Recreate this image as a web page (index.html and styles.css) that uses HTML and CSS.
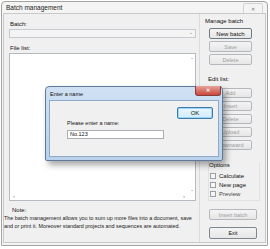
FILE: index.html
```html
<!DOCTYPE html>
<html>

<head>
  <title>Batch management</title>
  <link rel="stylesheet" href="styles.css">
</head>

<body>
  <div class="window">
    <div class="titlebar">
      <span class="title">Batch management</span>
      <span class="close">&#x2715;</span>
    </div>
    <div class="client">
      <div class="main">
        <div class="label">Batch:</div>
        <div class="combo"><span class="arrow">&#x2304;</span></div>
        <div class="label list-label">File list:</div>
        <div class="listbox">
          <div class="vscroll">
            <span>&#x2304;</span>
            <span>&#x2304;</span>
          </div>
          <div class="hscroll">
            <span>&#x2039;</span>
            <span>&#x203A;</span>
          </div>
        </div>
        <div class="note-label">Note:</div>
        <p class="note">The batch management allows you to sum up more files into a document, save<br>and or print it. Moreover standard projects and sequences are automated.</p>
      </div>

      <div class="side">
        <div class="group-label">Manage batch</div>
        <button class="btn default">New batch</button>
        <button class="btn" disabled>Save</button>
        <button class="btn" disabled>Delete</button>

        <div class="group-label edit-label">Edit list:</div>
        <button class="btn small" disabled>Add</button>
        <button class="btn small" disabled>Insert</button>
        <button class="btn small" disabled>Delete</button>
        <button class="btn small" disabled>Upload</button>
        <button class="btn small" disabled>Downward</button>

        <div class="options">
          <div class="group-label">Options</div>
          <label class="check"><span class="box"></span>Calculate</label>
          <label class="check"><span class="box"></span>New page</label>
          <label class="check off"><span class="box"></span>Preview</label>
        </div>

        <button class="btn wide" disabled>Insert batch</button>
        <button class="btn wide exit">Exit</button>
      </div>
    </div>
  </div>

  <!-- modal over the main window -->
  <div class="dialog">
    <div class="dlg-titlebar">
      <span class="dlg-title">Enter a name</span>
      <span class="dlg-close">&#x2715;</span>
    </div>
    <div class="dlg-client">
      <div class="dlg-text">Please enter a name:</div>
      <div class="dlg-input">No.123</div>
      <button class="ok">OK</button>
    </div>
  </div>
</body>

</html>
```

FILE: styles.css
```css
body {
  margin: 0;
  background-color: #fff;
  font-family: "Liberation Sans", Arial, sans-serif;
  font-size: 6px;
  color: #111;
}

.window {
  box-sizing: border-box;
  width: 267px;
  height: 245px;
  margin: 1px 0 0 1px;
  border: 1px solid #a3a3a3;
  border-radius: 4px 4px 1px 1px;
  background-color: #f4f4f4;
  display: flex;
  flex-direction: column;
}

.titlebar {
  height: 11px;
  display: flex;
  align-items: center;
  justify-content: space-between;
  padding: 0 4px 0 4px;
}

.title {
  font-size: 6.5px;
  color: #222;
}

.close {
  width: 18px;
  height: 10px;
  margin-top: 2px;
  border: 1px solid #d4d4d4;
  border-radius: 2px;
  font-size: 5px;
  color: #777;
  text-align: center;
  line-height: 10px;
}

.client {
  flex: 1;
  display: flex;
  margin: 0 1px 2px 1px;
  border: 1px solid #c9c9c9;
  background-color: #f0f0f0;
}

.main {
  width: 195px;
  padding-top: 6px;
}

.label {
  margin-left: 6px;
  height: 8px;
  line-height: 8px;
}

.combo {
  position: relative;
  height: 9px;
  margin: 1px 0 0 5px;
  width: 187px;
  box-sizing: border-box;
  border: 1px solid #c7cbd1;
  background-color: #f4f4f4;
}

.arrow {
  position: absolute;
  right: 2px;
  top: -1px;
  font-size: 5px;
  color: #777;
}

.list-label {
  margin-top: 6px;
}

.listbox {
  position: relative;
  box-sizing: border-box;
  width: 187px;
  height: 148px;
  margin: 1px 0 0 5px;
  border: 1px solid #b5b9c0;
  background-color: #fff;
}

.vscroll {
  position: absolute;
  right: 0;
  top: 0;
  bottom: 8px;
  width: 7px;
  display: flex;
  flex-direction: column;
  justify-content: space-between;
  align-items: center;
  font-size: 5px;
  color: #888;
}

.hscroll {
  position: absolute;
  left: 0;
  right: 7px;
  bottom: 0;
  height: 8px;
  display: flex;
  justify-content: space-between;
  padding: 0 3px;
  font-size: 6px;
  line-height: 8px;
  color: #888;
}

.note-label {
  margin: 5px 0 0 8px;
  height: 8px;
  line-height: 8px;
}

.note {
  margin: 0;
  white-space: nowrap;
  font-size: 5.4px;
  line-height: 8px;
  color: #1a1a1a;
}

.side {
  flex: 1;
  border-left: 1px solid #dcdcdc;
  padding: 3px 0 0 5px;
  display: flex;
  flex-direction: column;
}

.group-label {
  height: 8px;
  line-height: 8px;
  margin-bottom: 3px;
}

.edit-label {
  margin: 8px 0 5px 3px;
}

.btn {
  box-sizing: border-box;
  width: 43px;
  height: 11px;
  margin: 0 0 2px 4px;
  padding: 0;
  border: 1px solid #b4b8bd;
  border-radius: 2px;
  background: linear-gradient(#f4f4f4, #e6e6e6);
  font-family: "Liberation Sans", Arial, sans-serif;
  font-size: 5.5px;
  color: #a0a0a0;
}

.btn.default {
  border-color: #6f7a87;
  color: #111;
  font-size: 6px;
}

.btn.small {
  height: 10px;
  margin-bottom: 3px;
}

.options {
  margin: 9px 5px 0 3px;
  border: 1px solid #e2e2e2;
  border-top: none;
  height: 38px;
}

.options .group-label {
  margin: -1px 0 2px 0;
}

.check {
  display: flex;
  align-items: center;
  height: 9px;
  margin-left: 1px;
}

.box {
  box-sizing: border-box;
  width: 6px;
  height: 6px;
  margin-right: 3px;
  border: 1px solid #9aa0a7;
  background-color: #f6f6f6;
}

.check.off {
  color: #444;
}

.btn.wide {
  width: 48px;
  margin-top: 8px;
}

.btn.exit {
  margin-top: 5px;
  height: 12px;
  border-color: #7d8794;
  color: #111;
}

.dialog {
  position: absolute;
  left: 45px;
  top: 86px;
  width: 178px;
  height: 75px;
  box-sizing: border-box;
  border: 1px solid #5d7a98;
  border-radius: 4px 4px 2px 2px;
  background: linear-gradient(#cfe0f3, #b9d1ea);
  box-shadow: 3px 4px 6px rgba(0, 0, 0, 0.35);
  display: flex;
  flex-direction: column;
}

.dlg-titlebar {
  height: 13px;
  display: flex;
  justify-content: space-between;
  padding: 0 1px 0 4px;
}

.dlg-title {
  margin-top: 4px;
  font-size: 5.5px;
  color: #111;
}

.dlg-close {
  width: 24px;
  height: 9px;
  margin-top: -1px;
  border: 1px solid #8a3b3b;
  border-top: none;
  border-radius: 0 0 3px 3px;
  background: linear-gradient(#e7a49a, #c9463a);
  color: #fff;
  font-size: 5px;
  font-weight: bold;
  text-align: center;
  line-height: 9px;
}

.dlg-client {
  position: relative;
  flex: 1;
  margin: 0 3px 3px 3px;
  border: 1px solid #8fa9c8;
  background-color: #f0f0f0;
}

.dlg-text {
  position: absolute;
  left: 17px;
  top: 19px;
  font-size: 5.5px;
}

.dlg-input {
  position: absolute;
  left: 17px;
  top: 29px;
  width: 97px;
  height: 9px;
  box-sizing: border-box;
  border: 1px solid #abadb3;
  background-color: #fff;
  padding-left: 2px;
  font-size: 5.5px;
  line-height: 7px;
}

.ok {
  position: absolute;
  left: 127px;
  top: 6px;
  width: 36px;
  height: 12px;
  box-sizing: border-box;
  padding: 0;
  border: 1px solid #3d7bad;
  border-radius: 2px;
  background: linear-gradient(#eaf6fd, #d1ecfa);
  box-shadow: inset 0 0 0 1px #9ed4f5;
  font-family: "Liberation Sans", Arial, sans-serif;
  font-size: 6px;
  color: #111;
}
```
